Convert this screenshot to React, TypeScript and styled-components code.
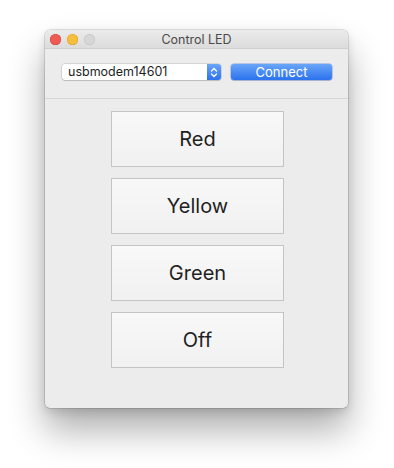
import React from "react";
import styled, { createGlobalStyle } from "styled-components";

const GlobalStyle = createGlobalStyle`
    html, body {
        margin: 0;
        padding: 0;
        background: #ffffff;
    }
    body {
        font-family: Inter, "Noto Sans", "Liberation Sans", sans-serif;
    }
`;

const Page = styled.div`
    width: 394px;
    height: 468px;
    padding: 30px 0 0 45px;
    box-sizing: border-box;
`;

const Window = styled.div`
    width: 303px;
    height: 378px;
    background: #ececec;
    border-radius: 5px;
    box-shadow: 0 0 0 0.5px rgba(0, 0, 0, 0.22), 0 22px 36px rgba(0, 0, 0, 0.32),
        0 4px 10px rgba(0, 0, 0, 0.12);
    display: flex;
    flex-direction: column;
    overflow: hidden;
`;

const TitleBar = styled.div`
    position: relative;
    height: 18px;
    display: flex;
    align-items: center;
    justify-content: center;
    background: linear-gradient(#ebebeb, #dcdcdc);
    border-bottom: 1px solid #cfcfcf;
    font-size: 12.5px;
    color: #4a4a4a;
`;

const Lights = styled.div`
    position: absolute;
    left: 5px;
    top: 4px;
    display: flex;
    gap: 6px;
`;

const Light = styled.span<{ $color: string; $edge: string }>`
    width: 11px;
    height: 11px;
    border-radius: 50%;
    background: ${(p) => p.$color};
    box-shadow: inset 0 0 0 0.5px ${(p) => p.$edge};
`;

const Toolbar = styled.div`
    display: flex;
    align-items: center;
    gap: 10px;
    padding: 15px 16px 18px 17px;
    border-bottom: 1px solid #d6d6d6;
`;

const Popup = styled.div`
    width: 159px;
    height: 16px;
    display: flex;
    background: #ffffff;
    border-radius: 3px;
    box-shadow: 0 0 0 0.5px rgba(0, 0, 0, 0.2), 0 1px 1px rgba(0, 0, 0, 0.12);
    overflow: hidden;
`;

const PopupLabel = styled.span`
    flex: 1;
    padding-left: 6px;
    font-size: 12.5px;
    line-height: 16px;
    color: #1e1e1e;
`;

const Stepper = styled.span`
    width: 14px;
    display: flex;
    align-items: center;
    justify-content: center;
    background: linear-gradient(#6aa5f8, #2d73ef);
`;

const ConnectButton = styled.button`
    width: 101px;
    height: 16px;
    padding: 0;
    border: none;
    border-radius: 3px;
    background: linear-gradient(#69a5f8, #2b72ee);
    box-shadow: 0 0 0 0.5px rgba(30, 80, 200, 0.5), 0 1px 1px rgba(0, 0, 0, 0.1);
    color: #ffffff;
    font-family: inherit;
    font-size: 13px;
    line-height: 16px;
`;

const ButtonList = styled.div`
    display: flex;
    flex-direction: column;
    align-items: center;
    gap: 11px;
    padding: 12px 0 0 2px;
`;

const LedButton = styled.button`
    width: 173px;
    height: 56px;
    border: 1px solid #c4c4c4;
    background: linear-gradient(#f8f8f8, #f1f1f1);
    color: #1f1f1f;
    font-family: inherit;
    font-size: 20px;
    padding: 0;
`;

const Chevrons = () => (
    <svg width="8" height="11" viewBox="0 0 8 11" fill="none" stroke="#ffffff" strokeWidth="1.3" strokeLinecap="round" strokeLinejoin="round">
        <path d="M1.5 4 L4 1.5 L6.5 4" />
        <path d="M1.5 7 L4 9.5 L6.5 7" />
    </svg>
);

const App: React.FC = () => (
    <>
        <GlobalStyle />
        <Page>
            <Window>
                <TitleBar>
                    <Lights>
                        <Light $color="#ee5b54" $edge="#d4453f" />
                        <Light $color="#f6be3d" $edge="#dba12c" />
                        <Light $color="#d6d6d6" $edge="#c4c4c4" />
                    </Lights>
                    Control LED
                </TitleBar>
                <Toolbar>
                    <Popup>
                        <PopupLabel>usbmodem14601</PopupLabel>
                        <Stepper>
                            <Chevrons />
                        </Stepper>
                    </Popup>
                    <ConnectButton>Connect</ConnectButton>
                </Toolbar>
                <ButtonList>
                    {["Red", "Yellow", "Green", "Off"].map((label) => (
                        <LedButton key={label}>{label}</LedButton>
                    ))}
                </ButtonList>
            </Window>
        </Page>
    </>
);

export default App;
